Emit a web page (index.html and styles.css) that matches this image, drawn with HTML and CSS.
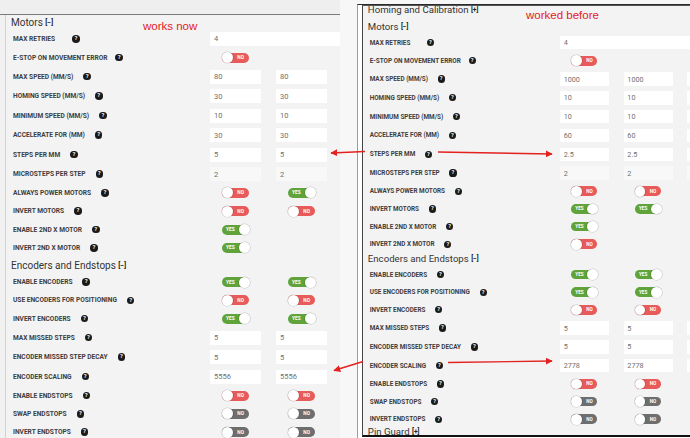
FILE: index.html
```html
<!DOCTYPE html>
<html lang="en">
<head>
  <meta charset="UTF-8">
  <title>Hardware settings: works now / worked before</title>
  <link rel="stylesheet" href="styles.css">
</head>
<body>
  <!-- left capture: current build -->
  <div class="shot shot-now">
    <div class="topbar"></div>
    <div class="frame">
      <div class="panel">
        <h3 class="section first">Motors <span class="fold">[−]</span></h3>
        <div class="row"><span class="label">Max Retries<i class="help spaced">?</i></span><input class="field wide" value="4" readonly></div>
        <div class="row t"><span class="label">E-stop on movement error<i class="help close">?</i></span><span class="toggle off">no</span></div>
        <div class="row"><span class="label">Max speed (mm/s)<i class="help">?</i></span><input class="field" value="80" readonly><input class="field" value="80" readonly><input class="field" readonly></div>
        <div class="row"><span class="label">Homing speed (mm/s)<i class="help">?</i></span><input class="field" value="30" readonly><input class="field" value="30" readonly><input class="field" readonly></div>
        <div class="row"><span class="label">Minimum speed (mm/s)<i class="help">?</i></span><input class="field" value="10" readonly><input class="field" value="10" readonly><input class="field" readonly></div>
        <div class="row"><span class="label">Accelerate for (mm)<i class="help">?</i></span><input class="field" value="30" readonly><input class="field" value="30" readonly><input class="field" readonly></div>
        <div class="row"><span class="label">Steps per mm<i class="help">?</i></span><input class="field" value="5" readonly><input class="field" value="5" readonly><input class="field" readonly></div>
        <div class="row"><span class="label">Microsteps per step<i class="help">?</i></span><input class="field" value="2" disabled><input class="field" value="2" disabled><input class="field" disabled></div>
        <div class="row t"><span class="label">Always power motors<i class="help">?</i></span><span class="toggle off">no</span><span class="toggle on">yes</span></div>
        <div class="row t"><span class="label">Invert motors<i class="help">?</i></span><span class="toggle off">no</span><span class="toggle off">no</span></div>
        <div class="row t"><span class="label">Enable 2nd X motor<i class="help">?</i></span><span class="toggle on">yes</span></div>
        <div class="row t"><span class="label">Invert 2nd X motor<i class="help">?</i></span><span class="toggle on">yes</span></div>

        <h3 class="section">Encoders and Endstops <span class="fold">[−]</span></h3>
        <div class="row t"><span class="label">Enable encoders<i class="help">?</i></span><span class="toggle on">yes</span><span class="toggle on">yes</span></div>
        <div class="row t"><span class="label">Use encoders for positioning<i class="help">?</i></span><span class="toggle off">no</span><span class="toggle off">no</span></div>
        <div class="row t"><span class="label">Invert encoders<i class="help">?</i></span><span class="toggle on">yes</span><span class="toggle on">yes</span></div>
        <div class="row"><span class="label">Max missed steps<i class="help">?</i></span><input class="field" value="5" readonly><input class="field" value="5" readonly><input class="field" readonly></div>
        <div class="row"><span class="label">Encoder missed step decay<i class="help">?</i></span><input class="field" value="5" readonly><input class="field" value="5" readonly><input class="field" readonly></div>
        <div class="row"><span class="label">Encoder scaling<i class="help">?</i></span><input class="field" value="5556" readonly><input class="field" value="5556" readonly><input class="field" readonly></div>
        <div class="row t"><span class="label">Enable endstops<i class="help">?</i></span><span class="toggle off">no</span><span class="toggle off">no</span></div>
        <div class="row t"><span class="label">Swap endstops<i class="help">?</i></span><span class="toggle off grey">no</span><span class="toggle off grey">no</span></div>
        <div class="row t"><span class="label">Invert endstops<i class="help">?</i></span><span class="toggle off grey">no</span><span class="toggle off grey">no</span></div>
      </div>
    </div>
  </div>

  <!-- right capture: older build -->
  <div class="shot shot-before">
    <div class="frame">
      <div class="panel">
        <h3 class="section top">Homing and Calibration <span class="fold">[+]</span></h3>
        <h3 class="section after-top">Motors <span class="fold">[−]</span></h3>
        <div class="row"><span class="label">Max Retries<i class="help spaced">?</i></span><input class="field wide" value="4" readonly></div>
        <div class="row t"><span class="label">E-stop on movement error<i class="help close">?</i></span><span class="toggle off">no</span></div>
        <div class="row"><span class="label">Max speed (mm/s)<i class="help">?</i></span><input class="field" value="1000" readonly><input class="field" value="1000" readonly><input class="field" value="1000" readonly></div>
        <div class="row"><span class="label">Homing speed (mm/s)<i class="help">?</i></span><input class="field" value="10" readonly><input class="field" value="10" readonly><input class="field" value="10" readonly></div>
        <div class="row"><span class="label">Minimum speed (mm/s)<i class="help">?</i></span><input class="field" value="10" readonly><input class="field" value="10" readonly><input class="field" value="10" readonly></div>
        <div class="row"><span class="label">Accelerate for (mm)<i class="help">?</i></span><input class="field" value="60" readonly><input class="field" value="60" readonly><input class="field" value="60" readonly></div>
        <div class="row"><span class="label">Steps per mm<i class="help">?</i></span><input class="field" value="2.5" readonly><input class="field" value="2.5" readonly><input class="field" value="2.5" readonly></div>
        <div class="row"><span class="label">Microsteps per step<i class="help">?</i></span><input class="field" value="2" disabled><input class="field" value="2" disabled><input class="field" value="2" disabled></div>
        <div class="row t"><span class="label">Always power motors<i class="help">?</i></span><span class="toggle off">no</span><span class="toggle off">no</span></div>
        <div class="row t"><span class="label">Invert motors<i class="help">?</i></span><span class="toggle on">yes</span><span class="toggle on">yes</span></div>
        <div class="row t"><span class="label">Enable 2nd X motor<i class="help">?</i></span><span class="toggle on">yes</span></div>
        <div class="row t"><span class="label">Invert 2nd X motor<i class="help">?</i></span><span class="toggle off">no</span></div>

        <h3 class="section tight">Encoders and Endstops <span class="fold">[−]</span></h3>
        <div class="row t"><span class="label">Enable encoders<i class="help">?</i></span><span class="toggle on">yes</span><span class="toggle on">yes</span></div>
        <div class="row t"><span class="label">Use encoders for positioning<i class="help">?</i></span><span class="toggle on">yes</span><span class="toggle on">yes</span></div>
        <div class="row t"><span class="label">Invert encoders<i class="help">?</i></span><span class="toggle off">no</span><span class="toggle off">no</span></div>
        <div class="row"><span class="label">Max missed steps<i class="help">?</i></span><input class="field" value="5" readonly><input class="field" value="5" readonly><input class="field" value="5" readonly></div>
        <div class="row"><span class="label">Encoder missed step decay<i class="help">?</i></span><input class="field" value="5" readonly><input class="field" value="5" readonly><input class="field" value="5" readonly></div>
        <div class="row"><span class="label">Encoder scaling<i class="help">?</i></span><input class="field" value="2778" readonly><input class="field" value="2778" readonly><input class="field" value="2778" readonly></div>
        <div class="row t"><span class="label">Enable endstops<i class="help">?</i></span><span class="toggle off">no</span><span class="toggle off">no</span></div>
        <div class="row t"><span class="label">Swap endstops<i class="help">?</i></span><span class="toggle off grey">no</span><span class="toggle off grey">no</span></div>
        <div class="row t"><span class="label">Invert endstops<i class="help">?</i></span><span class="toggle off grey">no</span><span class="toggle off grey">no</span></div>
        <h3 class="section last">Pin Guard <span class="fold">[+]</span></h3>
      </div>
    </div>
  </div>

  <!-- annotations drawn on top of both captures -->
  <span class="note note-now">works now</span>
  <span class="note note-before">worked before</span>
  <svg class="arrows" width="690" height="438" viewBox="0 0 690 438">
    <defs>
      <marker id="head" viewBox="0 0 10 10" refX="9" refY="5" markerWidth="5" markerHeight="5" orient="auto">
        <path d="M0 0 L10 5 L0 10 z" fill="#e3211f"/>
      </marker>
    </defs>
    <line x1="365" y1="151.5" x2="331" y2="153" marker-end="url(#head)"/>
    <line x1="438" y1="152" x2="552" y2="154" marker-end="url(#head)"/>
    <line x1="363" y1="361.5" x2="334" y2="370.5" marker-end="url(#head)"/>
    <line x1="448" y1="362.5" x2="552" y2="361" marker-end="url(#head)"/>
  </svg>
</body>
</html>
```

FILE: styles.css
```css
body {
  margin: 0;
  width: 690px;
  height: 438px;
  overflow: hidden;
  display: flex;
  align-items: flex-start;
  background-color: #f7f7f7;
  font-family: Roboto, "Liberation Sans", sans-serif;
  color: #333;
  position: relative;
}

/* the two captures */
.shot {
  overflow: hidden;
  flex: none;
}
.shot-now {
  width: 340px;
  height: 438px;
  background-color: #f1f1f1;
}
.shot-now .topbar {
  height: 14px;
  background-color: #efefef;
  border-bottom: 1px solid #7b7b7b;
}
.shot-now .frame {
  margin-left: 5px;
  height: 423px;
  border-left: 1px solid #d2d2d2;
  background-color: #f3f3f3;
}
.shot-before {
  margin-left: 17px;
  margin-top: 4px;
  width: 333px;
  height: 434px;
  border-left: 1px solid #9c9c9c;
  border-top: 1px solid #2b2b2b;
  padding-left: 4px;
  background-color: #fff;
}
.shot-before .frame {
  height: 432px;
  box-sizing: border-box;
  border-left: 1px solid #444;
  border-top: 1px solid #555;
  border-bottom: 2px solid #111;
  background-color: #f3f3f3;
  overflow: hidden;
}
.shot-before .panel {
  zoom: 0.965;
}

/* settings panel */
.panel {
  padding-left: 5px;
}
.section {
  margin: 0;
  padding-top: 2px;
  font-size: 10px;
  line-height: 13px;
  font-weight: 400;
  color: #333;
  white-space: nowrap;
}
.section.first {
  line-height: 12px;
}
.section.top {
  padding-top: 0;
  line-height: 9px;
}
.section.after-top {
  padding-top: 6px;
  line-height: 12px;
}
.section.tight {
  padding-top: 0;
  line-height: 12px;
}
.section.last {
  padding-top: 0;
  line-height: 9px;
}
.fold {
  font-size: 7px;
  font-weight: 700;
  color: #222;
  vertical-align: 1px;
}

.row {
  display: grid;
  grid-template-columns: 184px 51px 51px 51px;
  column-gap: 15px;
  align-items: center;
  height: 19.5px;
}
.row.t {
  height: 18.3px;
}
.label {
  display: flex;
  align-items: center;
  padding-left: 2px;
  font-size: 6.6px;
  font-weight: 700;
  text-transform: uppercase;
  color: #3d3d3d;
  white-space: nowrap;
}
.help {
  margin-left: 10px;
  width: 7.5px;
  height: 7.5px;
  border-radius: 50%;
  background-color: #1a1a1a;
  color: #fff;
  font-style: normal;
  font-size: 5.8px;
  line-height: 7.5px;
  text-align: center;
}
.help.spaced {
  margin-left: 17px;
}
.help.close {
  margin-left: 8px;
}

.field {
  box-sizing: border-box;
  width: 51px;
  height: 14px;
  margin: 0;
  padding: 0 4px;
  border: none;
  border-radius: 0;
  background-color: #fff;
  font-family: Roboto, sans-serif;
  font-size: 7.5px;
  color: #6f6f6f;
  outline: none;
}
.field.wide {
  grid-column: 2 / -1;
  width: 160px;
}
.field:disabled {
  background-color: #f8f8f8;
  color: #6f6f6f;
}

/* yes / no switches */
.toggle {
  position: relative;
  justify-self: center;
  box-sizing: border-box;
  display: flex;
  align-items: center;
  width: 27px;
  height: 10px;
  border-radius: 5px;
  font-size: 4.8px;
  font-weight: 700;
  text-transform: uppercase;
  color: #fff;
}
.toggle::before {
  content: "";
  position: absolute;
  top: -0.5px;
  width: 11px;
  height: 11px;
  border-radius: 50%;
  background-color: #fff;
  box-shadow: 0 0 0 0.6px rgba(0, 0, 0, 0.2);
}
.toggle.off {
  justify-content: flex-end;
  padding-right: 5px;
  background-color: #e85b5b;
}
.toggle.off::before {
  left: -0.5px;
}
.toggle.on {
  justify-content: flex-start;
  padding-left: 4px;
  background-color: #5fa33a;
}
.toggle.on::before {
  right: -0.5px;
}
.toggle.grey {
  background-color: #6e6e6e;
}

/* red annotations */
.note {
  position: absolute;
  font-family: "Liberation Sans", Arial, sans-serif;
  font-size: 11.5px;
  color: #e3211f;
  white-space: nowrap;
}
.note-now {
  left: 143px;
  top: 20px;
}
.note-before {
  left: 526px;
  top: 9px;
}
.arrows {
  position: absolute;
  left: 0;
  top: 0;
  pointer-events: none;
}
.arrows line {
  stroke: #e3211f;
  stroke-width: 1.4;
}
```
